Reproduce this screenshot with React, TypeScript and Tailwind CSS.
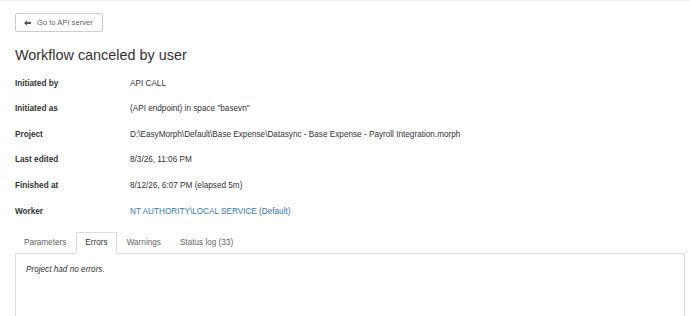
import { useState } from "react";

const rows: { label: string; value: string; link?: boolean }[] = [
  { label: "Initiated by", value: "API CALL" },
  { label: "Initiated as", value: '(API endpoint) in space "basevn"' },
  {
    label: "Project",
    value:
      "D:\\EasyMorph\\Default\\Base Expense\\Datasync - Base Expense - Payroll Integration.morph",
  },
  { label: "Last edited", value: "8/3/26, 11:06 PM" },
  { label: "Finished at", value: "8/12/26, 6:07 PM (elapsed 5m)" },
  { label: "Worker", value: "NT AUTHORITY\\LOCAL SERVICE (Default)", link: true },
];

const tabs = ["Parameters", "Errors", "Warnings", "Status log (33)"];

export default function App() {
  const [active, setActive] = useState("Errors");

  return (
    <div className="w-[690px] h-[316px] overflow-hidden bg-white border-t border-[#eeeeee] font-['Liberation_Sans',Arial,sans-serif] text-[#333333]">
      <div className="pl-[15px] pr-[5px] pt-[12px]">
        {/* Back button */}
        <button className="flex items-center gap-[6px] h-[19px] pl-[8px] pr-[9px] border border-[#cccccc] rounded-[2px] bg-white text-[7.6px] text-[#666666]">
          <svg width="7" height="6" viewBox="0 0 14 12" className="text-[#555555]">
            <path d="M0 6 L6 0.5 L6 4 L14 4 L14 8 L6 8 L6 11.5 Z" fill="currentColor" />
          </svg>
          <span>Go to API server</span>
        </button>

        {/* Title */}
        <h1 className="mt-[13px] text-[14.4px] leading-[20px] font-normal">Workflow canceled by user</h1>

        {/* Details */}
        <div className="mt-[6px] flex flex-col">
          {rows.map((r) => (
            <div key={r.label} className="flex items-center h-[25.6px] text-[8.2px]">
              <div className="w-[115px] font-bold">{r.label}</div>
              <div className={r.link ? "text-[#337ab7]" : ""}>{r.value}</div>
            </div>
          ))}
        </div>

        {/* Tabs */}
        <div className="mt-[7px] flex border-b border-[#dddddd]">
          {tabs.map((t) => {
            const on = t === active;
            return (
              <button
                key={t}
                onClick={() => setActive(t)}
                className={
                  "mr-[1px] -mb-[1px] px-[8px] py-[4px] text-[8.2px] leading-[12px] rounded-t-[2px] border " +
                  (on
                    ? "bg-white border-[#dddddd] border-b-white text-[#333333]"
                    : "border-transparent text-[#666666]")
                }
              >
                {t}
              </button>
            );
          })}
        </div>
        <div className="h-[80px] border-x border-[#dddddd] px-[10px] pt-[10px]">
          <p className="text-[8.2px] italic">Project had no errors.</p>
        </div>
      </div>
    </div>
  );
}
